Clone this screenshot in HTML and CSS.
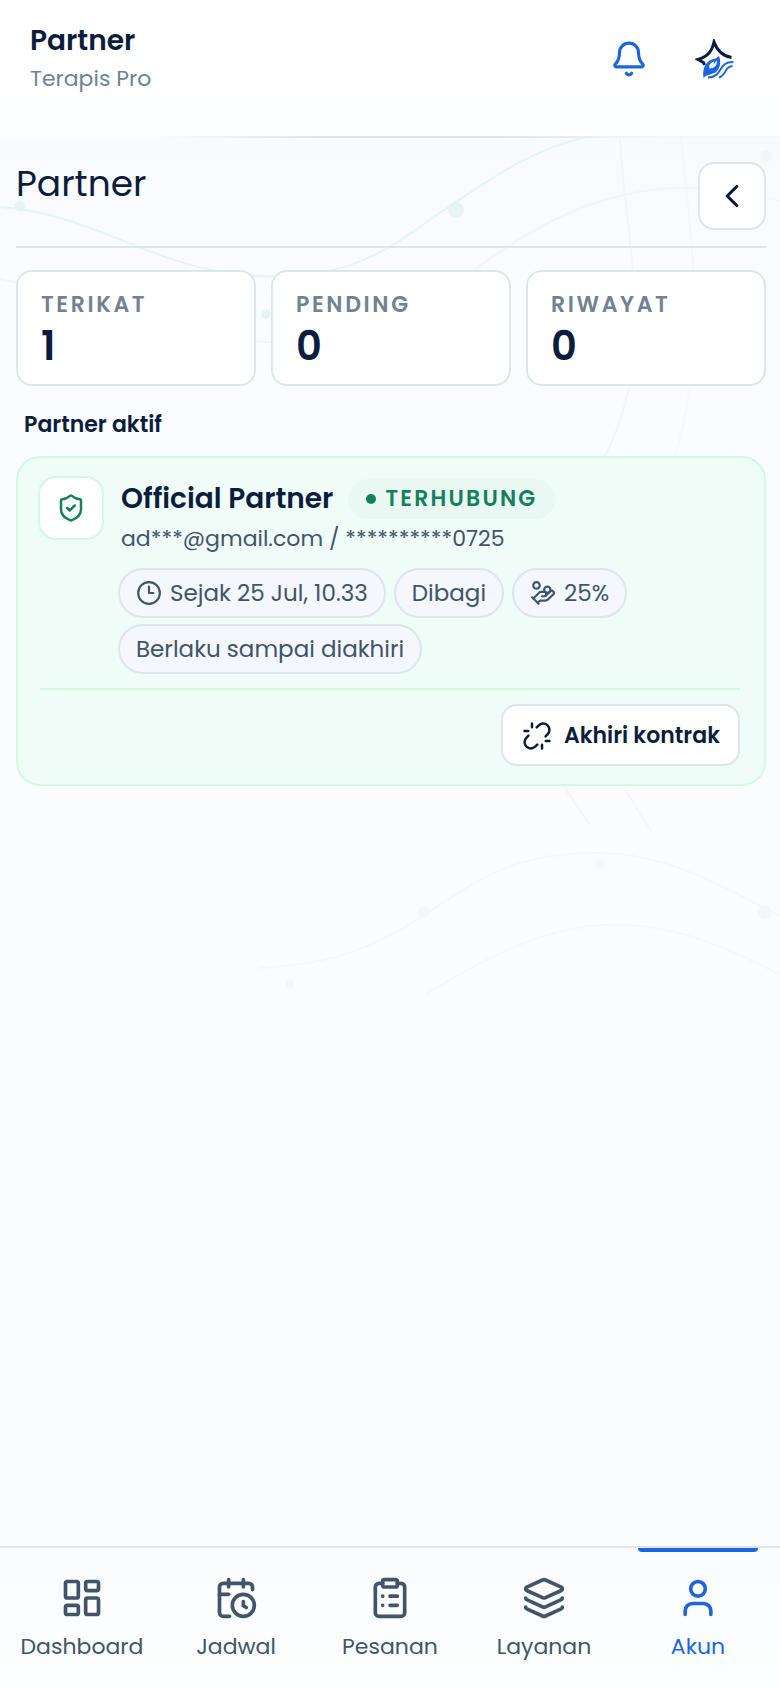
FILE: index.html
```html
<!DOCTYPE html>
<html lang="id">
<head>
<meta charset="utf-8">
<meta name="viewport" content="width=device-width, initial-scale=1">
<title>Partner</title>
<link rel="stylesheet" href="styles.css">
</head>
<body>
<svg class="backdrop" viewBox="0 0 780 1688" preserveAspectRatio="xMidYMin slice" fill="none" aria-hidden="true">
  <g class="mint">
    <path d="M0 207C80 212 140 256 212 270C350 296 400 238 450 206C500 172 540 145 600 134"/>
    <circle cx="20" cy="206" r="4"/><circle cx="456" cy="210" r="7"/><circle cx="266" cy="314" r="4"/>
  </g>
  <g class="grey">
    <path d="M0 279C110 300 180 345 290 342C420 330 470 265 530 233C620 180 700 180 780 201"/>
    <path d="M620 136C624 240 660 350 605 456C560 560 520 700 566 790L590 825"/>
    <circle cx="766" cy="156" r="5"/>
  </g>
  <g class="grey faint">
    <path d="M681 136C690 240 710 340 675 456"/>
    <path d="M625 790L652 832"/>
    <path d="M260 968C440 960 440 850 600 853C670 854 730 890 780 916"/>
    <path d="M425 995C560 910 640 900 780 975"/>
    <circle cx="600" cy="864" r="4"/><circle cx="424" cy="912" r="5"/><circle cx="765" cy="912" r="6"/><circle cx="290" cy="984" r="3"/>
  </g>
</svg>

<header class="topbar">
  <div class="topbar-text">
    <strong class="topbar-title">Partner</strong>
    <span class="topbar-sub">Terapis Pro</span>
  </div>
  <div class="topbar-actions">
    <button class="icon-button" type="button" aria-label="Notifikasi">
      <svg class="icon icon-bell" viewBox="0 0 24 24"><path d="M10.268 21a2 2 0 0 0 3.464 0"/><path d="M3.262 15.326A1 1 0 0 0 4 17h16a1 1 0 0 0 .74-1.673C19.41 13.956 18 12.499 18 8A6 6 0 0 0 6 8c0 4.499-1.411 5.956-2.738 7.326"/></svg>
    </button>
    <button class="icon-button" type="button" aria-label="Profil">
      <svg class="brand" viewBox="0 0 40 40" fill="none">
        <path class="brand-star" d="M9.500 26L8.500 23.500L3 20.500C13 17.500 17 12 19 3C22 11 27 17 36.500 18.500"/>
        <path class="brand-hand" fill-rule="evenodd" d="M8.500 39C7.500 31 9 26 14 22C17 19.500 21 20.500 24 17C26 22 26 29 20.500 33.500C16 36 12 35 8.500 39ZM14.500 29.500C13.500 25.500 16 23.500 19 22.500L18.500 25.500L21.500 21.500C23 26 19 29.500 14.500 29.500Z"/>
        <path class="brand-wave" d="M13 38.500C29 38 22 22.500 38.500 23M24 38.500C32 36 29 27.500 37.500 27"/>
      </svg>
    </button>
  </div>
</header>

<main class="page">
  <div class="page-head">
    <h1 class="page-title">Partner</h1>
    <button class="back" type="button" aria-label="Kembali">
      <svg class="icon icon-back" viewBox="0 0 24 24"><path d="m15 18-6-6 6-6"/></svg>
    </button>
  </div>

  <dl class="stats">
    <div class="stat"><dt>TERIKAT</dt><dd>1</dd></div>
    <div class="stat"><dt>PENDING</dt><dd>0</dd></div>
    <div class="stat"><dt>RIWAYAT</dt><dd>0</dd></div>
  </dl>

  <h2 class="section-title">Partner aktif</h2>

  <article class="card">
    <div class="card-main">
      <div class="card-icon">
        <svg class="icon icon-shield" viewBox="0 0 24 24"><path d="M20 13c0 5-3.500 7.500-7.660 8.950a1 1 0 0 1-.67-.01C7.500 20.500 4 18 4 13V6a1 1 0 0 1 1-1c2 0 4.500-1.200 6.240-2.720a1.170 1.170 0 0 1 1.520 0C14.510 3.810 17 5 19 5a1 1 0 0 1 1 1z"/><path d="m9 12 2 2 4-4"/></svg>
      </div>
      <div class="card-body">
        <div class="card-heading">
          <h3 class="card-title">Official Partner</h3>
          <span class="badge">TERHUBUNG</span>
        </div>
        <p class="card-contact">ad***@gmail.com / **********0725</p>
        <ul class="chips">
          <li class="chip"><svg class="icon icon-chip" viewBox="0 0 24 24"><circle cx="12" cy="12" r="10"/><path d="M12 6v6h4"/></svg>Sejak 25 Jul, 10.33</li>
          <li class="chip">Dibagi</li>
          <li class="chip"><svg class="icon icon-chip" viewBox="0 0 24 24"><path d="M11 15h2a2 2 0 1 0 0-4h-3c-.6 0-1.100.2-1.400.6L3 17"/><path d="m7 21 1.600-1.400c.3-.4.800-.6 1.400-.6h4c1.100 0 2.100-.4 2.800-1.200l4.600-4.400a2 2 0 0 0-2.750-2.910l-4.200 3.900"/><path d="m2 16 6 6"/><circle cx="16" cy="9" r="2.900"/><circle cx="6" cy="5" r="3"/></svg>25%</li>
          <li class="chip">Berlaku sampai diakhiri</li>
        </ul>
      </div>
    </div>
    <div class="card-foot">
      <button class="end-button" type="button">
        <svg class="icon icon-unlink" viewBox="0 0 24 24"><path d="m18.840 12.250 1.720-1.710h-.02a5.004 5.004 0 0 0-.12-7.070 5.006 5.006 0 0 0-6.950 0l-1.720 1.710"/><path d="m5.170 11.750-1.710 1.710a5.004 5.004 0 0 0 .12 7.070 5.006 5.006 0 0 0 6.950 0l1.710-1.710"/><path d="M8 2v3M2 8h3M16 19v3M19 16h3"/></svg>
        Akhiri kontrak
      </button>
    </div>
  </article>
</main>

<nav class="tabs" aria-label="Navigasi utama">
  <a class="tab" href="#"><svg class="icon icon-tab" viewBox="0 0 24 24"><rect width="7" height="9" x="3" y="3" rx="1"/><rect width="7" height="5" x="14" y="3" rx="1"/><rect width="7" height="9" x="14" y="12" rx="1"/><rect width="7" height="5" x="3" y="16" rx="1"/></svg>Dashboard</a>
  <a class="tab" href="#"><svg class="icon icon-tab" viewBox="0 0 24 24"><path d="M16 14v2.200l1.600 1"/><path d="M16 2v4"/><path d="M21 7.500V6a2 2 0 0 0-2-2H5a2 2 0 0 0-2 2v14a2 2 0 0 0 2 2h3.500"/><path d="M3 10h5"/><path d="M8 2v4"/><circle cx="16" cy="16" r="6"/></svg>Jadwal</a>
  <a class="tab" href="#"><svg class="icon icon-tab" viewBox="0 0 24 24"><rect width="8" height="4" x="8" y="2" rx="1"/><path d="M16 4h2a2 2 0 0 1 2 2v14a2 2 0 0 1-2 2H6a2 2 0 0 1-2-2V6a2 2 0 0 1 2-2h2"/><path d="M12 11h4M12 16h4M8 11h.01M8 16h.01"/></svg>Pesanan</a>
  <a class="tab" href="#"><svg class="icon icon-tab" viewBox="0 0 24 24"><path d="M12.830 2.180a2 2 0 0 0-1.660 0L2.600 6.080a1 1 0 0 0 0 1.830l8.580 3.910a2 2 0 0 0 1.660 0l8.580-3.900a1 1 0 0 0 0-1.830z"/><path d="M2 12a1 1 0 0 0 .58.91l8.600 3.910a2 2 0 0 0 1.650 0l8.580-3.900A1 1 0 0 0 22 12"/><path d="M2 17a1 1 0 0 0 .58.91l8.600 3.910a2 2 0 0 0 1.650 0l8.580-3.900A1 1 0 0 0 22 17"/></svg>Layanan</a>
  <a class="tab tab-active" href="#" aria-current="page"><svg class="icon icon-tab" viewBox="0 0 24 24"><path d="M19 21v-2a4 4 0 0 0-4-4H9a4 4 0 0 0-4 4v2"/><circle cx="12" cy="7" r="4"/></svg>Akun</a>
</nav>
</body>
</html>
```

FILE: styles.css
```css
:root {
  --ink: #0b1d3c;
  --slate: #42546a;
  --muted: #708294;
  --line: #dce6eb;
  --mint-line: #d0f9e6;
  --green: #15805d;
  --blue: #1b66df;
}

* {
  box-sizing: border-box;
}

body {
  position: relative;
  display: flex;
  flex-direction: column;
  min-height: 100vh;
  margin: 0;
  background: linear-gradient(#f8f9fd, #fafcfe 320px, #fbfcfe);
  color: var(--ink);
  font-family: Poppins, Inter, "Liberation Sans", sans-serif;
  font-size: 22px;
  line-height: 32px;
}

h1, h2, h3, p, dl, dd, ul {
  margin: 0;
  padding: 0;
}

button {
  padding: 0;
  border: 0;
  background: none;
  color: inherit;
  font: inherit;
  cursor: pointer;
}

.icon {
  flex: none;
  fill: none;
  stroke: currentColor;
  stroke-width: 2;
  stroke-linecap: round;
  stroke-linejoin: round;
}

.backdrop {
  position: absolute;
  inset: 0;
  z-index: -1;
  width: 100%;
  height: 100%;
}

.mint {
  stroke: #e6f5f1;
  stroke-width: 2;
}

.mint circle {
  fill: #e6f4f2;
}

.grey {
  stroke: #f3f5f8;
  stroke-width: 2;
}

.grey circle {
  fill: #f1f5f8;
}

.faint {
  opacity: 0.6;
}

.topbar {
  display: flex;
  justify-content: space-between;
  align-items: flex-start;
  padding: 21px 30px 20px;
  border-bottom: 2px solid;
  border-image: linear-gradient(90deg, #fafcfe 20%, var(--line) 40%, var(--line) 65%, #f5f8fa 85%) 1;
  background: linear-gradient(#fff 70%, #fcfeff);
}

.topbar-text {
  display: flex;
  flex-direction: column;
  gap: 2px;
  padding-bottom: 21px;
}

.topbar-title {
  font-size: 28px;
  font-weight: 600;
  line-height: 40px;
}

.topbar-sub {
  color: var(--muted);
  line-height: 32px;
}

.topbar-actions {
  display: flex;
  gap: 16px;
}

.icon-button {
  display: grid;
  place-items: center;
  width: 70px;
  height: 76px;
  color: var(--blue);
}

.icon-bell {
  width: 38px;
  height: 38px;
}

.brand {
  width: 40px;
  height: 40px;
}

.brand-star {
  stroke: var(--ink);
  stroke-width: 3;
}

.brand-hand {
  fill: var(--blue);
}

.brand-wave {
  stroke: var(--blue);
  stroke-width: 2;
}

.page {
  flex: 1;
  padding: 24px 14px 32px 16px;
}

.page-head {
  display: flex;
  justify-content: space-between;
  align-items: flex-start;
  padding-bottom: 16px;
  border-bottom: 2px solid var(--line);
}

.page-title {
  font-size: 36px;
  font-weight: 400;
  line-height: 44px;
}

.back {
  display: grid;
  place-items: center;
  width: 68px;
  height: 68px;
  border: 2px solid var(--line);
  border-radius: 16px;
  background: #fff;
}

.icon-back {
  width: 38px;
  height: 38px;
}

.stats {
  display: grid;
  grid-template-columns: repeat(3, 1fr);
  gap: 15px;
  margin-top: 22px;
}

.stat {
  padding: 16px 23px 14px;
  border: 2px solid var(--line);
  border-radius: 16px;
  background: #fff;
}

.stat dt {
  color: var(--muted);
  font-weight: 600;
  letter-spacing: 0.12em;
  line-height: 34px;
}

.stat dd {
  font-size: 40px;
  font-weight: 600;
  line-height: 48px;
}

.section-title {
  margin: 23px 8px 15px;
  font-size: 22px;
  font-weight: 600;
  line-height: 32px;
}

.card {
  padding: 18px 24px 18px 20px;
  border: 2px solid var(--mint-line);
  border-radius: 24px;
  background: #effcf8;
}

.card-main {
  display: flex;
  align-items: flex-start;
  gap: 14px;
}

.card-icon {
  display: grid;
  flex: none;
  place-items: center;
  width: 66px;
  height: 64px;
  border: 2px solid var(--mint-line);
  border-radius: 18px;
  background: #fff;
  color: var(--green);
}

.icon-shield {
  width: 30px;
  height: 30px;
}

.card-body {
  flex: 1;
  min-width: 0;
}

.card-heading {
  display: flex;
  flex-wrap: wrap;
  align-items: center;
  gap: 4px 15px;
  padding: 3px 0 0 3px;
}

.card-title {
  font-size: 28px;
  font-weight: 600;
  line-height: 40px;
}

.badge {
  display: flex;
  align-items: center;
  gap: 9px;
  height: 40px;
  padding: 0 18px;
  border-radius: 20px;
  background: #e9f8f3;
  color: var(--green);
  font-weight: 600;
  letter-spacing: 0.1em;
}

.badge::before {
  width: 10px;
  height: 10px;
  border-radius: 50%;
  background: currentColor;
  content: "";
}

.card-contact {
  padding-left: 3px;
  color: var(--slate);
  line-height: 40px;
}

.chips {
  display: flex;
  flex-wrap: wrap;
  gap: 6px 8px;
  margin-top: 9px;
  list-style: none;
}

.chip {
  display: flex;
  align-items: center;
  gap: 8px;
  height: 50px;
  padding: 0 16px;
  border: 2px solid var(--line);
  border-radius: 25px;
  background: #f4f7fb;
  color: var(--slate);
  font-size: 23px;
}

.icon-chip {
  width: 26px;
  height: 26px;
}

.card-foot {
  display: flex;
  justify-content: flex-end;
  margin: 14px 0 0 2px;
  padding-top: 14px;
  border-top: 2px solid var(--mint-line);
}

.end-button {
  display: flex;
  align-items: center;
  gap: 12px;
  height: 62px;
  padding: 2px 18px 0 19px;
  border: 2px solid var(--line);
  border-radius: 16px;
  background: #fff;
  font-weight: 600;
}

.icon-unlink {
  width: 30px;
  height: 30px;
}

.tabs {
  position: sticky;
  bottom: 0;
  display: grid;
  grid-template-columns: repeat(5, 1fr);
  padding: 0 5px;
  border-top: 2px solid #dde6ee;
  background: linear-gradient(#fafcfe, #fdfefe);
}

.tab {
  position: relative;
  display: flex;
  flex-direction: column;
  align-items: center;
  gap: 11px;
  padding: 28px 0 25px;
  color: var(--slate);
  text-decoration: none;
}

.icon-tab {
  width: 44px;
  height: 44px;
}

.tab-active {
  color: var(--blue);
}

.tab-active::before {
  position: absolute;
  top: 0;
  width: 120px;
  height: 4px;
  border-radius: 0 0 4px 4px;
  background: var(--blue);
  content: "";
}
```
